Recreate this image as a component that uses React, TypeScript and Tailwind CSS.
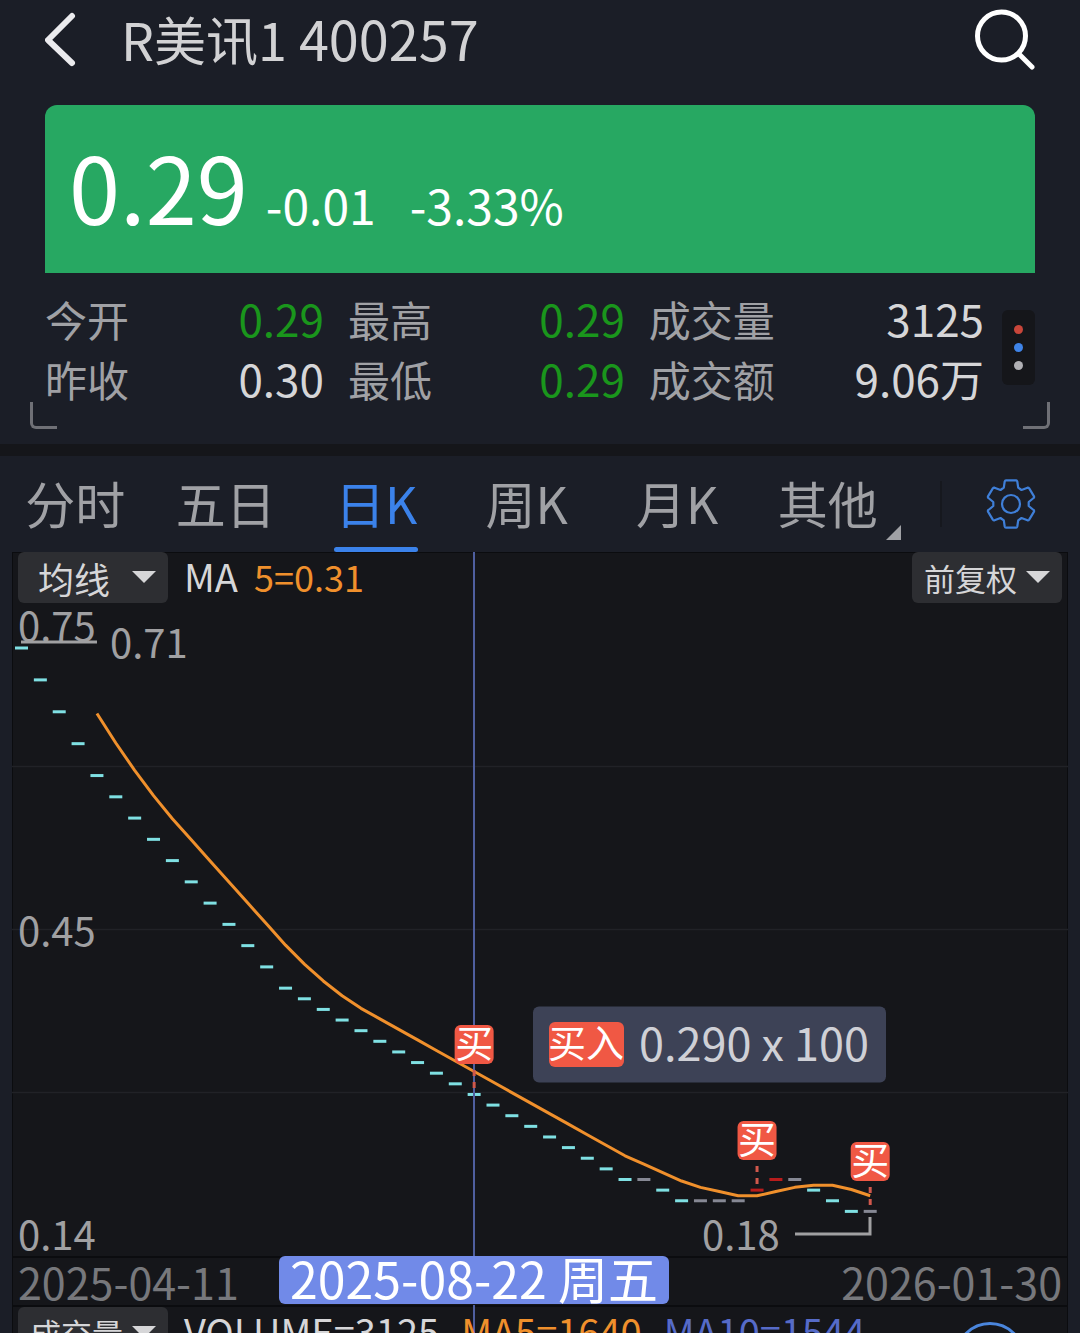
import { useState } from 'react'
import clsx from 'clsx'

const FONT = "font-['Noto_Sans_CJK_SC','Noto_Sans',sans-serif]"

const stats = [
  { label: '今开', value: '0.29', color: 'text-[#1a961c]' },
  { label: '最高', value: '0.29', color: 'text-[#1a961c]' },
  { label: '成交量', value: '3125', color: 'text-[#d6d6d8]' },
  { label: '昨收', value: '0.30', color: 'text-[#d6d6d8]' },
  { label: '最低', value: '0.29', color: 'text-[#1a961c]' },
  { label: '成交额', value: '9.06万', color: 'text-[#d6d6d8]' },
]

const tabs = ['分时', '五日', '日K', '周K', '月K', '其他']

// closing prices in cents, one per trading day
const closes = [
  71, 68, 65, 62, 59, 57, 55, 53, 51, 49, 47, 45, 43, 41, 39, 38,
  37, 36, 35, 34, 33, 32, 31, 30, 29, 28, 27, 26, 25, 24, 23, 22,
  21, 21, 20, 19, 19, 19, 19, 20, 21, 21, 20, 19, 18, 18,
]

const buys = [
  { day: 24, top: 473 },
  { day: 39, top: 569 },
  { day: 45, top: 590 },
]

const dayX = (i: number) => 9.5 + i * 18.86
const priceY = (cents: number) => 96 + (71 - cents) * 10.63
const maY = (cents: number) => 161.5 + (65 - cents) * 10.53

function candleColor(i: number) {
  if (i === 0 || closes[i] < closes[i - 1]) return '#7fe0e3'
  if (closes[i] > closes[i - 1]) return '#b81c1c'
  return '#868894'
}

const maPoints = closes
  .map((_, i) => {
    if (i < 4) return null
    const sum = closes.slice(i - 4, i + 1).reduce((a, b) => a + b, 0)
    return `${dayX(i)},${maY(sum / 5)}`
  })
  .filter(Boolean)
  .join(' ')

function ChipSelect({ label, options, className }: { label: string, options: string[], className: string }) {
  return (
    <label className="relative block h-[51px] w-[150px] shrink-0">
      <span className="sr-only">{label}</span>
      <select className={clsx('block h-full w-full appearance-none rounded-md bg-[#2d2e32] text-[#d6d6d8] outline-none', className)}>
        {options.map((o) => (
          <option key={o}>{o}</option>
        ))}
      </select>
      <svg className="pointer-events-none absolute right-3 top-[19px]" width="24" height="12" viewBox="0 0 24 12">
        <path d="M0 0h24L12 12z" fill="#d6d6d8" />
      </svg>
    </label>
  )
}

function PriceChart() {
  return (
    <svg className="block h-auto w-full" viewBox="0 0 1056 704" role="img" aria-label="日K">
      {[214, 377, 540].map((y) => (
        <line key={y} x1="0" x2="1056" y1={y + 0.5} y2={y + 0.5} stroke="#212227" strokeWidth="1.5" />
      ))}

      <g fill="#a0a0a2" fontSize="40">
        <text x="6" y="89">0.75</text>
        <text x="98" y="106">0.71</text>
        <text x="6" y="394">0.45</text>
        <text x="6" y="698">0.14</text>
        <text x="690" y="698">0.18</text>
      </g>
      <path d="M9 90H85M783 682H858V665" fill="none" stroke="#a0a0a2" strokeWidth="3" />

      {closes.map((c, i) => (
        <rect key={i} x={dayX(i) - 6.5} y={priceY(c) - 1.5} width="13" height="3" fill={candleColor(i)} />
      ))}
      <polyline points={maPoints} fill="none" stroke="#f0902c" strokeWidth="3" strokeLinejoin="round" />

      {/* crosshair */}
      <line x1="462" x2="462" y1="0" y2="704" stroke="#4f5f9f" strokeWidth="2" />

      {buys.map(({ day, top }) => (
        <g key={day}>
          <path d={`M${dayX(day)} ${top + 45}v6m0 6v6`} stroke="#d0584c" strokeWidth="3" />
          <rect x={dayX(day) - 19.5} y={top} width="39" height="39" rx="6" fill="#f05844" />
          <text x={dayX(day)} y={top + 32} fill="#fff" fontSize="38" textAnchor="middle">买</text>
        </g>
      ))}

      {/* trade tip */}
      <rect x="521" y="454.5" width="353" height="76" rx="6" fill="#3d4256" />
      <rect x="537" y="470" width="75" height="45" rx="6" fill="#f05844" />
      <text x="536" y="505" fill="#fff" fontSize="38">买入</text>
      <text x="627" y="509" fill="#cfd0d6" fontSize="45">0.290 x 100</text>
    </svg>
  )
}

export default function App() {
  const [active, setActive] = useState('日K')

  return (
    <div className={clsx(FONT, 'flex h-screen flex-col overflow-hidden bg-[#1b1e27]')} lang="zh-CN">
      <header className="flex h-20 shrink-0 items-center px-[45px] text-[#d2d2d4]">
        <button aria-label="返回" className="shrink-0">
          <svg width="32" height="56" viewBox="0 0 32 56" fill="none" stroke="#ebebee" strokeWidth="6" strokeLinecap="round" strokeLinejoin="round">
            <path d="M27 4L3 28l24 23" />
          </svg>
        </button>
        <h1 className="ml-11 flex flex-1 items-baseline gap-3 pb-1 text-[52px] leading-none">
          R美讯1 <span className="text-[54px]">400257</span>
        </h1>
        <button aria-label="搜索" className="shrink-0">
          <svg width="60" height="62" viewBox="0 0 60 62" fill="none" stroke="#fff" strokeWidth="5" strokeLinecap="round">
            <circle cx="26.5" cy="27" r="24" />
            <path d="M44 45l13 13" />
          </svg>
        </button>
      </header>

      <section className="relative shrink-0 px-[45px] pb-9 pt-[25px]">
        <div className="flex h-[168px] items-baseline rounded-t-xl bg-[#27a862] px-6 pt-[34px] leading-none text-white">
          <span className="text-[92px]">0.29</span>
          <span className="ml-[18px] text-[48px]">-0.01</span>
          <span className="ml-[34px] text-[48px]">-3.33%</span>
        </div>

        <div className="mt-[15px] flex">
          <dl className="grid flex-1 grid-cols-[278fr_276fr_334fr] gap-x-6">
            {stats.map((s) => (
              <div key={s.label} className="flex h-[60px] items-baseline justify-between leading-[60px]">
                <dt className="text-[42px] text-[#a0a1a5]">{s.label}</dt>
                <dd className={clsx('text-[44px]', s.color)}>{s.value}</dd>
              </div>
            ))}
          </dl>
          <button aria-label="更多" className="ml-[18px] mt-[22px] flex h-[75px] w-[33px] flex-col items-center justify-center gap-[9px] rounded-md bg-[#15161a]">
            <span className="size-[9px] rounded-full bg-[#c8463a]" />
            <span className="size-[9px] rounded-full bg-[#3f84e8]" />
            <span className="size-[9px] rounded-full bg-[#b0b0b4]" />
          </button>
        </div>

        <span className="absolute bottom-[15px] left-[30px] h-[27px] w-[27px] rounded-bl-md border-b-3 border-l-3 border-[#6f7076]" />
        <span className="absolute bottom-[15px] right-[30px] h-[27px] w-[27px] rounded-br-md border-b-3 border-r-3 border-[#6f7076]" />
      </section>

      <div className="h-3 shrink-0 bg-[#15161a]" />

      <div className="flex h-24 shrink-0 items-center">
        <nav className="flex h-full flex-1">
          {tabs.map((t) => (
            <button
              key={t}
              onClick={() => setActive(t)}
              className={clsx(
                'relative flex flex-1 items-center justify-center pb-1 text-[50px] leading-none',
                t === active ? 'text-[#3b82ea]' : 'text-[#a0a1a5]'
              )}
            >
              {t}
              {t === active && <span className="absolute bottom-0 h-[5px] w-[84px] rounded-sm bg-[#3b82ea]" />}
              {t === '其他' && (
                <svg className="absolute bottom-3 right-0.5" width="15" height="15" viewBox="0 0 15 15">
                  <path d="M15 0v15H0z" fill="#a0a1a5" />
                </svg>
              )}
            </button>
          ))}
        </nav>
        <button aria-label="设置" className="ml-[37px] flex h-[46px] w-[140px] items-center justify-center border-l-2 border-[#16181e]">
          <svg width="52" height="52" viewBox="-26 -26 52 52" fill="none" stroke="#3f7fd8" strokeWidth="2.2" strokeLinejoin="round">
            <path d="M-5-23.7H5Q6-23.7 6.3-22.5L7.2-16.4 10.5-14 16.5-16.3Q17.5-16.5 18.2-15.6L23-7.6Q23.4-6.6 22.6-6L17.7-2V2L22.6 6Q23.4 6.6 23 7.6L18.2 15.6Q17.5 16.5 16.5 16.3L10.5 14 7.2 16.4 6.3 22.5Q6 23.7 5 23.7H-5Q-6 23.7-6.3 22.5L-7.2 16.4-10.5 14-16.5 16.3Q-17.5 16.5-18.2 15.6L-23 7.6Q-23.4 6.6-22.6 6L-17.7 2V-2L-22.6-6Q-23.4-6.6-23-7.6L-18.2-15.6Q-17.5-16.5-16.5-16.3L-10.5-14-7.2-16.4-6.3-22.5Q-6-23.7-5-23.7Z" />
            <circle r="9" />
          </svg>
        </button>
      </div>

      <main className="relative mx-3 flex-1 bg-[#15161a] outline-1 -outline-offset-1 outline-[#0b0c0f]">
        <div className="relative">
          <PriceChart />
          <div className="absolute inset-x-[6px] top-0 flex items-center">
            <ChipSelect label="指标" options={['均线', '布林线']} className="pl-5 text-[36px] leading-10" />
            <p className="ml-4 flex flex-1 items-baseline gap-4 pb-1 leading-none">
              <span className="text-[38px] text-[#d6d6d8]">MA</span>
              <span className="text-[36px] text-[#f0902c]">5=0.31</span>
            </p>
            <ChipSelect label="复权" options={['前复权', '后复权', '不复权']} className="pl-3 text-[31px] leading-10" />
          </div>
        </div>

        <div className="relative flex h-[51px] items-center justify-between border-y-2 border-[#0b0c0f] px-[6px] text-[43px] leading-none text-[#77787c]">
          <time>2025-04-11</time>
          <time>2026-01-30</time>
          <span className="absolute -bottom-8 left-[43.75%] h-8 w-0.5 -translate-x-1/2 bg-[#4f5f9f]" />
          <time className="absolute -top-0.5 left-[43.75%] flex h-12 w-[390px] -translate-x-1/2 items-center justify-center whitespace-pre rounded-md bg-[#718ae8] pb-1.5 text-[50px] leading-none text-white">2025-08-22 周五</time>
        </div>

        <div className="relative flex items-center px-[6px]">
          <ChipSelect label="副图指标" options={['成交量', 'MACD', 'KDJ']} className="pl-3 text-[31px] leading-10" />
          <p className="ml-4 flex gap-[22px] pb-1 text-[38px] leading-none">
            <span className="text-[#d6d6d8]">VOLUME=3125</span>
            <span className="text-[#f0902c]">MA5=1640</span>
            <span className="text-[#566bc8]">MA10=1544</span>
          </p>
          <button aria-label="放大" className="absolute right-[43px] top-[15px] size-[70px] rounded-full border-3 border-[#4a86dd]" />
        </div>
      </main>
    </div>
  )
}
